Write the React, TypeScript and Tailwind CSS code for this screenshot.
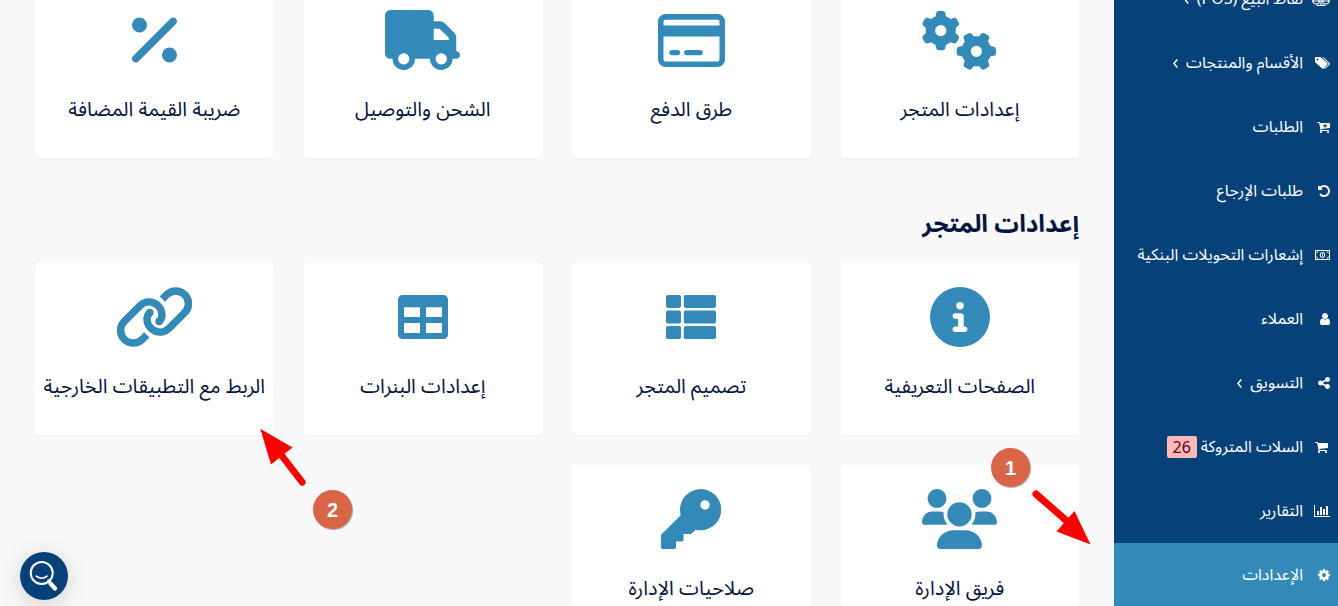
import type { ReactNode } from "react";
import { FaPercent, FaCircleInfo, FaGears } from "react-icons/fa6";

function Glyph({ d, box = "128 0 1536 1792", className = "h-[14px] w-[12px]" }: { d: string; box?: string; className?: string }) {
  return (
    <svg viewBox={box} className={className} fill="currentColor">
      <path d={d} />
    </svg>
  );
}

const USER =
  "M1536 1399q0 109-62.5 187t-150.5 78h-854q-88 0-150.5-78t-62.5-187q0-85 8.5-160.5t31.5-152 58.5-131 94-89 134.5-34.5q131 128 313 128t313-128q76 0 134.5 34.5t94 89 58.5 131 31.5 152 8.5 160.5zm-256-887q0 159-112.5 271.5t-271.5 112.5-271.5-112.5-112.5-271.5 112.5-271.5 271.5-112.5 271.5 112.5 112.5 271.5z";
const COG =
  "M1152 896q0-106-75-181t-181-75-181 75-75 181 75 181 181 75 181-75 75-181zm512-109v222q0 12-8 23t-20 13l-185 28q-19 54-39 91 35 50 107 138 10 12 10 25t-9 23q-27 37-99 108t-94 71q-12 0-26-9l-138-108q-44 23-91 38-16 136-29 186-7 28-36 28h-222q-14 0-24.5-8.5t-11.5-21.5l-28-184q-49-16-90-37l-141 107q-10 9-25 9-14 0-25-11-126-114-165-168-7-10-7-23 0-12 8-23 15-21 51-66.5t54-70.5q-27-50-41-99l-183-27q-13-2-21-12.5t-8-23.5v-222q0-12 8-23t19-13l186-28q14-46 39-92-40-57-107-138-10-12-10-24 0-10 9-23 26-36 98.5-107.5t94.5-71.5q13 0 26 10l138 107q44-23 91-38 16-136 29-186 7-28 36-28h222q14 0 24.5 8.5t11.5 21.5l28 184q49 16 90 37l142-107q9-9 24-9 13 0 25 10 129 119 165 170 7 8 7 22 0 12-8 23-15 21-51 66.5t-54 70.5q26 50 41 98l183 28q13 2 21 12.5t8 23.5z";
const CART =
  "M704 1536q0 52-38 90t-90 38-90-38-38-90 38-90 90-38 90 38 38 90zm896 0q0 52-38 90t-90 38-90-38-38-90 38-90 90-38 90 38 38 90zm128-1088v512q0 24-16.5 42.5t-40.5 21.5l-1044 122q13 60 13 70 0 16-24 64h920q26 0 45 19t19 45-19 45-45 19h-1024q-26 0-45-19t-19-45q0-11 8-31.5t16-36 21.5-40 15.5-29.5l-177-823h-204q-26 0-45-19t-19-45 19-45 45-19h256q16 0 28.5 6.5t19.5 15.5 13 24.5 8 26 5.5 29.5 4.5 26h1201q26 0 45 19t19 45z";
const CHART =
  "M640 896v512h-256v-512h256zm384-512v1024h-256v-1024h256zm1024 1152v128h-2048v-1536h128v1408h1920zm-640-896v768h-256v-768h256zm384-384v1152h-256v-1152h256z";
const SHARE =
  "M1344 1024q133 0 226.5 93.5t93.5 226.5-93.5 226.5-226.5 93.5-226.5-93.5-93.5-226.5q0-12 2-34l-360-180q-92 86-218 86-133 0-226.5-93.5t-93.5-226.5 93.5-226.5 226.5-93.5q126 0 218 86l360-180q-2-22-2-34 0-133 93.5-226.5t226.5-93.5 226.5 93.5 93.5 226.5-93.5 226.5-226.5 93.5q-126 0-218-86l-360 180q2 22 2 34t-2 34l360 180q92-86 218-86z";
const UNDO =
  "M1664 896q0 156-61 298t-164 245-245 164-298 61q-172 0-327-72.5t-264-204.5q-7-10-6.5-22.5t8.5-20.5l137-138q10-9 25-9 16 2 23 12 73 95 179 147t225 52q104 0 198.5-40.5t163.5-109.5 109.5-163.5 40.5-198.5-40.5-198.5-109.5-163.5-163.5-109.5-198.5-40.5q-98 0-188 35.5t-160 101.5l137 138q31 30 14 69-17 40-59 40h-448q-26 0-45-19t-19-45v-448q0-42 40-59 39-17 69 14l130 129q107-101 244.5-156.5t284.5-55.5q156 0 298 61t245 164 164 245 61 298z";

function Scale() {
  return (
    <svg viewBox="0 0 18 14" className="h-[14px] w-[18px]" fill="none" stroke="currentColor" strokeWidth="1.2">
      <path d="M9 .5v13M4.500 13.400h9M3 2.500h12M4.200 3 1 9M4.200 3 7.300 9M13.800 3l-3.200 6M13.800 3 17 9" />
      <path d="M.6 9h7.200q-.6 3-3.600 3T.6 9zM10.200 9h7.200q-.6 3-3.600 3t-3.600-3z" />
    </svg>
  );
}

function Tags() {
  return (
    <svg viewBox="0 0 15 12" className="h-[12px] w-[15px]" fill="currentColor">
      <path
        fillRule="evenodd"
        d="M0 1Q0 0 1 0h3.800q.8 0 1.500.6l5.900 5.500q.8.8 0 1.600L8.800 11.400q-.8.8-1.600 0L.7 5.700Q0 5 0 4.200zM2.500 1.500a1 1 0 1 0 0 2 1 1 0 0 0 0-2z"
      />
      <path d="M7.300 0q1 0 1.700.6l5.500 5.500q.8.8 0 1.600l-3.700 3.800q-.6.6-1.300.2l4-4.300q.5-.5 0-1z" />
    </svg>
  );
}

function CartDown() {
  return (
    <svg viewBox="64 0 1664 1792" className="h-[14px] w-[13px]" fill="currentColor">
      <path d={CART} />
      <path d="M1100 470v380M880 680l220 210 220-210" fill="none" stroke="#064279" strokeWidth="130" />
    </svg>
  );
}

function Money() {
  return (
    <svg viewBox="0 0 15 10" className="h-[10px] w-[15px]" fill="none" stroke="currentColor">
      <rect x=".5" y=".5" width="14" height="9" />
      <path d="M1 3.200Q3 3 3 1M14 3.200Q12 3 12 1M1 6.800Q3 7 3 9M14 6.800Q12 7 12 9" strokeWidth=".8" />
      <ellipse cx="7.500" cy="5" rx="2.300" ry="2.700" />
      <path d="M7.600 3.200v3.600" strokeWidth=".9" />
    </svg>
  );
}

function Truck() {
  return (
    <svg viewBox="0 0 640 512" className="h-[60px] w-[75px]" fill="currentColor">
      <path
        fillRule="evenodd"
        d="M368 0C394.5 0 416 21.5 416 48V96H466.7C483.7 96 500 102.7 512 114.7L589.3 192C601.3 204 608 220.3 608 237.3V352C625.7 352 640 366.3 640 384C640 401.7 625.7 416 608 416H576C576 469 533 512 480 512C427 512 384 469 384 416H256C256 469 213 512 160 512C107 512 64 469 64 416H48C21.5 416 0 394.5 0 368V48C0 21.5 21.5 0 48 0H368zM416 160V256H544V237.3L466.7 160H416zM160 368C133.5 368 112 389.5 112 416C112 442.5 133.5 464 160 464C186.5 464 208 442.5 208 416C208 389.5 186.5 368 160 368zM480 464C506.5 464 528 442.5 528 416C528 389.5 506.5 368 480 368C453.5 368 432 389.5 432 416C432 442.5 453.5 464 480 464z"
      />
    </svg>
  );
}

function CreditCard() {
  return (
    <svg viewBox="0 0 67 53" className="h-[53px] w-[67px]" fill="currentColor">
      <path
        fillRule="evenodd"
        d="M7.500 0h52a7.500 7.500 0 0 1 7.500 7.500v38a7.500 7.500 0 0 1-7.500 7.500h-52a7.500 7.500 0 0 1-7.500-7.500v-38a7.500 7.500 0 0 1 7.500-7.500zM7.500 5.700a2 2 0 0 0-2 2v3.800h56v-3.800a2 2 0 0 0-2-2zM5.500 22.500v23a2 2 0 0 0 2 2h52a2 2 0 0 0 2-2v-23z"
      />
      <rect x="11.300" y="35.900" width="10.900" height="5.400" rx="2.700" />
      <rect x="26" y="35.900" width="18.800" height="5.400" rx="2.700" />
    </svg>
  );
}

function ListTiles() {
  return (
    <svg viewBox="0 0 50 44" className="h-[44px] w-[50px]" fill="currentColor">
      {[0, 15.6, 31.1].map((y) => (
        <g key={y}>
          <rect x="0" y={y} width="15" height="12.9" rx="1.8" />
          <rect x="17.8" y={y} width="32.2" height="12.9" rx="1.8" />
        </g>
      ))}
    </svg>
  );
}

function TableGrid() {
  return (
    <svg viewBox="0 0 50 44" className="h-[44px] w-[50px]" fill="currentColor">
      <path
        fillRule="evenodd"
        d="M4.5 0h41a4.5 4.5 0 0 1 4.5 4.5v35a4.5 4.5 0 0 1-4.5 4.5h-41a4.5 4.5 0 0 1-4.5-4.5v-35a4.5 4.5 0 0 1 4.5-4.5zM6 12.2v9.8h16v-9.8zM28 12.2v9.8h16v-9.8zM6 28v10h16v-10zM28 28v10h16v-10z"
      />
    </svg>
  );
}

function Chain() {
  const half = "M29.700 47.900 25.300 52.300A12.700 12.700 0 0 1 7.300 34.300L22.800 18.800A13 13 0 0 1 45 28Q45 31.500 42.200 34.300";
  const hook = "M42.100 34.400h.1";
  return (
    <svg viewBox="0 0 75 60" className="h-[60px] w-[75px]" fill="none" stroke="currentColor" strokeWidth="7.500">
      <path d={half} />
      <path d={hook} strokeLinecap="round" />
      <g transform="rotate(180 37.500 30)">
        <path d={half} />
        <path d={hook} strokeLinecap="round" />
      </g>
    </svg>
  );
}

function Team() {
  return (
    <svg viewBox="0 0 640 512" className="h-[60px] w-[75px]" fill="currentColor">
      <path d="M320 320c57.4 0 104-46.560 104-104c0-57.440-46.540-104-104-104c-57.410 0-104 46.560-104 104C216 273.400 262.500 320 320 320zM369.900 352H270.100C191.600 352 128 411.700 128 485.300C128 500.100 140.700 512 156.400 512h327.200C499.300 512 512 500.100 512 485.300C512 411.700 448.400 352 369.900 352zM512 160c44.180 0 80-35.820 80-80S556.200 0 512 0c-44.180 0-80 35.820-80 80S467.800 160 512 160zM183.900 216c0-5.449 .9824-10.630 1.609-15.910C174.600 194.100 162.600 192 149.900 192H88.080C39.440 192 0 233.800 0 285.300C0 295.600 7.887 304 17.620 304h199.500C196.700 280.200 183.900 249.700 183.900 216zM128 160c44.180 0 80-35.820 80-80S172.200 0 128 0C83.820 0 48 35.820 48 80S83.820 160 128 160zM551.900 192h-61.840c-12.800 0-24.880 3.037-35.860 8.240C454.800 205.500 455.800 210.600 455.800 216c0 33.710-12.780 64.210-33.160 88h199.700C632.100 304 640 295.600 640 285.300C640 233.800 600.600 192 551.900 192z" />
    </svg>
  );
}

function Key() {
  return (
    <svg viewBox="0 0 512 512" className="h-[60px] w-[60px]" fill="currentColor">
      <path
        fillRule="evenodd"
        d="M168.500 223.500 7 385Q0 392 0 400V496Q0 512 16 512H112Q128 512 128 496V448H176Q192 448 192 432V384H250Q258 384 264 378L296.500 347.500A176 176 0 1 0 168.500 223.500zM376 96a40 40 0 1 0 0 80 40 40 0 0 0 0-80z"
      />
    </svg>
  );
}

function Card({ icon, label }: { icon: ReactNode; label: string }) {
  return (
    <div className="flex h-[172px] flex-col items-center rounded bg-white pt-6 shadow-[0_1px_2px_rgba(0,0,0,0.04)]">
      <div className="flex h-[60px] items-center text-[#338ab9]">{icon}</div>
      <span className="mt-6 text-[20px] leading-8 whitespace-nowrap text-[#03163f]">{label}</span>
    </div>
  );
}

type Item = { icon: ReactNode; label: string; chevron?: boolean; badge?: string; active?: boolean };

const items: Item[] = [
  { icon: <Scale />, label: "نقاط البيع (POS)", chevron: true },
  { icon: <Tags />, label: "الأقسام والمنتجات", chevron: true },
  { icon: <CartDown />, label: "الطلبات" },
  { icon: <Glyph d={UNDO} />, label: "طلبات الإرجاع" },
  { icon: <Money />, label: "إشعارات التحويلات البنكية" },
  { icon: <Glyph d={USER} box="256 0 1280 1792" className="h-[14px] w-[10px]" />, label: "العملاء" },
  { icon: <Glyph d={SHARE} />, label: "التسويق", chevron: true },
  { icon: <Glyph d={CART} box="64 0 1664 1792" className="mr-[2px] h-[14px] w-[13px]" />, label: "السلات المتروكة", badge: "26" },
  { icon: <Glyph d={CHART} box="0 0 2048 1792" className="h-[14px] w-[16px]" />, label: "التقارير" },
  { icon: <Glyph d={COG} />, label: "الإعدادات", active: true },
];

function Sidebar() {
  return (
    <nav className="h-[606px] w-[224px] shrink-0 overflow-hidden bg-[#064279] text-white">
      <ul className="-mt-[33px]">
        {items.map((it) => (
          <li key={it.label} className={it.active ? "flex h-16 items-center bg-[#338ab9] pr-2" : "flex h-16 items-center pr-2"}>
            <span className="flex w-[27px] shrink-0 justify-start">{it.icon}</span>
            <span className="text-[16px] whitespace-nowrap">{it.label}</span>
            {it.chevron && (
              <svg viewBox="0 0 5 9" className="mr-2 h-[9px] w-[5px]" fill="none" stroke="currentColor" strokeWidth="1.5">
                <path d="M4.300 .6 1 4.500l3.300 3.900" />
              </svg>
            )}
            {it.badge && (
              <span className="mr-1 flex h-[22px] w-[30px] items-center justify-center rounded-[2px] bg-[#ffb8b8] font-['Noto_Sans'] text-[16px] text-[#64000f]">
                {it.badge}
              </span>
            )}
          </li>
        ))}
      </ul>
    </nav>
  );
}

function Marker({ n, className }: { n: string; className: string }) {
  return (
    <div
      dir="ltr"
      className={`absolute flex h-[39px] w-[39px] items-center justify-center rounded-full bg-[#da6546] font-['Liberation_Sans'] text-[20px] font-bold text-white shadow-[1px_1px_1px_rgba(0,0,0,0.35)] ${className}`}
    >
      {n}
    </div>
  );
}

export default function App() {
  return (
    <div
      dir="rtl"
      className="relative flex h-[606px] w-[1338px] overflow-hidden bg-[#f8f8f8] font-['Noto_Sans_Arabic','DejaVu_Sans',sans-serif]"
    >
      <Sidebar />
      <main className="h-[606px] w-[1114px] overflow-hidden px-[35px]">
        <div className="-mt-[14px] grid grid-cols-4 gap-[30px]">
          <Card icon={<FaGears className="h-[60px] w-[75px]" />} label="إعدادات المتجر" />
          <Card icon={<CreditCard />} label="طرق الدفع" />
          <Card icon={<Truck />} label="الشحن والتوصيل" />
          <Card icon={<FaPercent className="h-[60px] w-[45px]" />} label="ضريبة القيمة المضافة" />
        </div>
        <h2 className="mt-[47px] mb-[18px] text-[24.300px] leading-10 font-bold text-[#03163f]">إعدادات المتجر</h2>
        <div className="grid grid-cols-4 gap-[30px]">
          <Card icon={<FaCircleInfo className="h-[60px] w-[60px]" />} label="الصفحات التعريفية" />
          <Card icon={<ListTiles />} label="تصميم المتجر" />
          <Card icon={<TableGrid />} label="إعدادات البنرات" />
          <Card icon={<Chain />} label="الربط مع التطبيقات الخارجية" />
          <Card icon={<Team />} label="فريق الإدارة" />
          <Card icon={<Key />} label="صلاحيات الإدارة" />
        </div>
      </main>

      <svg viewBox="0 0 60 58" className="absolute top-[488px] left-[1032px] h-[58px] w-[60px]">
        <path d="M4 6 36 34" stroke="#ff0000" strokeWidth="7" strokeLinecap="round" />
        <path d="M58.500 56.500 24.500 43.500 42.500 23z" fill="#ff0000" />
      </svg>
      <svg viewBox="0 0 50 60" className="absolute top-[428px] left-[259px] h-[60px] w-[50px]">
        <path d="M43.200 54.200 23 28" stroke="#ff0000" strokeWidth="6.800" strokeLinecap="round" />
        <path d="M1.300 .8 33.500 19.500 12 36.500z" fill="#ff0000" />
      </svg>
      <Marker n="1" className="top-[448px] left-[991px]" />
      <Marker n="2" className="top-[490px] left-[313px]" />

      <button className="absolute top-[552px] left-5 flex h-12 w-12 items-center justify-center rounded-full bg-[#064279] shadow-[0_4px_24px_rgba(0,0,0,0.16)]">
        <svg viewBox="0 0 48 48" className="h-12 w-12" fill="none" stroke="#fff" strokeLinecap="round">
          <circle cx="21.700" cy="21" r="11" strokeWidth="2" />
          <path d="M16.200 24.200q5.500 4 11 0" strokeWidth="1.600" />
          <path d="M28.500 28.500l2 2.500" strokeWidth="2.500" />
          <path d="M30.500 31.500l4.600 5" strokeWidth="4.200" />
        </svg>
      </button>
    </div>
  );
}
